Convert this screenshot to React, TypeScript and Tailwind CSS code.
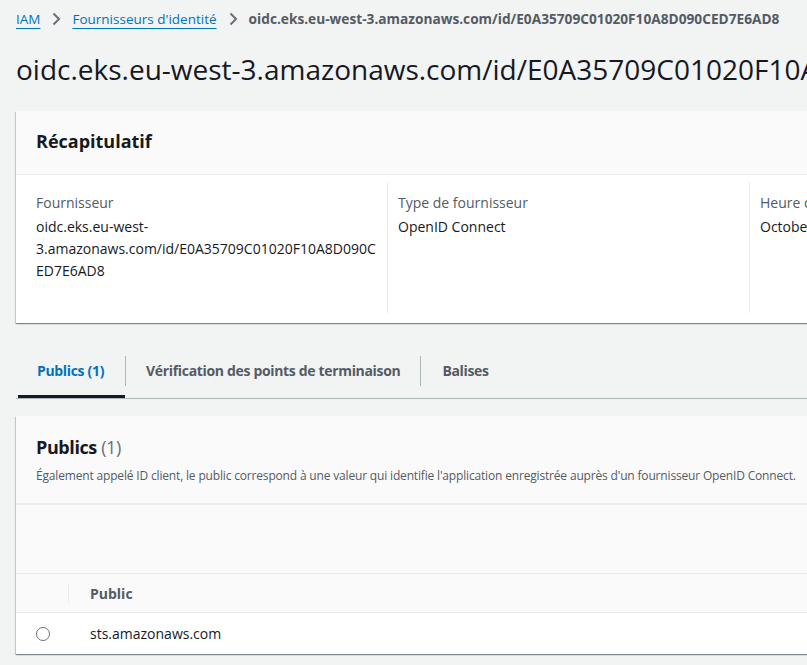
const Chevron = () => (
  <svg width="16" height="16" viewBox="0 0 16 16" className="mx-[8px] shrink-0">
    <path d="M5.5 2.5 11 8l-5.5 5.5" fill="none" stroke="#687078" strokeWidth="2" />
  </svg>
);

const font = "font-['Open_Sans','Noto_Sans',sans-serif]";

export default function App() {
  return (
    <div className={`w-full h-[665px] overflow-hidden bg-[#f2f3f3] text-[#16191f] ${font}`}>
      <div className="w-[1140px] px-4">
        {/* breadcrumbs */}
        <nav className="flex items-center h-[22px] mt-[8px] text-[13.5px] leading-[22px]">
          <a className="text-[#0073bb] underline underline-offset-[4px] decoration-1">IAM</a>
          <Chevron />
          <a className="text-[#0073bb] underline underline-offset-[4px] decoration-1">
            Fournisseurs d'identité
          </a>
          <Chevron />
          <span className="font-bold text-[#545b64] text-[13.7px]">
            oidc.eks.eu-west-3.amazonaws.com/id/E0A35709C01020F10A8D090CED7E6AD8
          </span>
        </nav>

        <h1 className="mt-[21px] text-[28px] leading-[36px] whitespace-nowrap">
          oidc.eks.eu-west-3.amazonaws.com/id/E0A35709C01020F10A8D090CED7E6AD8
        </h1>

        {/* summary */}
        <section className="mt-[24px] bg-white shadow-[0_1px_1px_0_rgba(0,28,36,0.3),1px_1px_1px_0_rgba(0,28,36,0.15),-1px_1px_1px_0_rgba(0,28,36,0.15)]">
          <div className="h-[64px] px-5 pt-[19px] bg-[#fafafa] border-b border-[#eaeded]">
            <h2 className="text-[18px] font-bold leading-[22px]">Récapitulatif</h2>
          </div>
          <div className="flex pl-5 pt-[7px] pb-[10px] text-[14px] leading-[22px]">
            <div className="w-[351px] pr-[10px] pt-[10px] pb-[31px]">
              <div className="text-[#545b64] mb-[2px]">Fournisseur</div>
              <div>
                <span className="block">oidc.eks.eu-west-</span>
                <span className="block">3.amazonaws.com/id/E0A35709C01020F10A8D090C</span>
                <span className="block">ED7E6AD8</span>
              </div>
            </div>
            <div className="w-[362px] border-l border-[#eaeded] pl-[10px] pt-[10px]">
              <div className="text-[#545b64] mb-[2px]">Type de fournisseur</div>
              <div>OpenID Connect</div>
            </div>
            <div className="w-[362px] border-l border-[#eaeded] pl-[10px] pt-[10px]">
              <div className="text-[#545b64] mb-[2px] whitespace-nowrap">Heure de création</div>
              <div className="whitespace-nowrap">October 27, 2022, 10:41 (UTC+02:00)</div>
            </div>
          </div>
        </section>

        {/* tabs */}
        <div className="mt-[20px] flex h-[56px] border-b border-[#aab7b8] text-[14px] font-bold leading-[22px] tracking-[-0.33px]">
          <div className="relative flex items-center ml-[2px] pl-[19px] pr-[21px] text-[#0073bb]">
            Publics (1)
            <span className="absolute left-0 right-0 bottom-0 h-[3px] bg-[#16191f]" />
          </div>
          <div className="flex items-center">
            <span className="w-px h-[30px] bg-[#aab7b8]" />
          </div>
          <div className="flex items-center px-[20px] text-[#545b64]">
            Vérification des points de terminaison
          </div>
          <div className="flex items-center">
            <span className="w-px h-[30px] bg-[#aab7b8]" />
          </div>
          <div className="flex items-center px-[21px] text-[#545b64]">Balises</div>
        </div>

        {/* audiences */}
        <section className="mt-[17px] bg-white shadow-[0_1px_1px_0_rgba(0,28,36,0.3),1px_1px_1px_0_rgba(0,28,36,0.15),-1px_1px_1px_0_rgba(0,28,36,0.15)]">
          <div className="bg-[#fafafa] border-b-2 border-[#eaeded] px-5 pt-[18px] pb-[17px]">
            <h2 className="text-[18px] leading-[26px] font-bold tracking-[-0.4px]">
              Publics <span className="font-normal text-[#687078]">(1)</span>
            </h2>
            <p className="mt-[6px] text-[12px] leading-[20px] text-[#545b64] tracking-[-0.17px]">
              Également appelé ID client, le public correspond à une valeur qui identifie l'application enregistrée auprès d'un fournisseur OpenID Connect.
            </p>
          </div>
          <div className="h-[69px] bg-[#fafafa] border-b border-[#eaeded]" />
          <div className="flex h-[39px] items-center bg-[#fafafa] border-b border-[#eaeded] text-[14px] font-bold text-[#545b64]">
            <div className="w-[53px] h-[20px] border-r border-[#eaeded]" />
            <div className="pl-[21px]">Public</div>
          </div>
          <div className="flex h-[41px] items-center text-[14px]">
            <div className="w-[53px] flex justify-center pl-[1px]">
              <span className="w-[14px] h-[14px] rounded-full border border-[#687078] bg-white" />
            </div>
            <div className="pl-[21px]">sts.amazonaws.com</div>
          </div>
        </section>
      </div>
    </div>
  );
}
